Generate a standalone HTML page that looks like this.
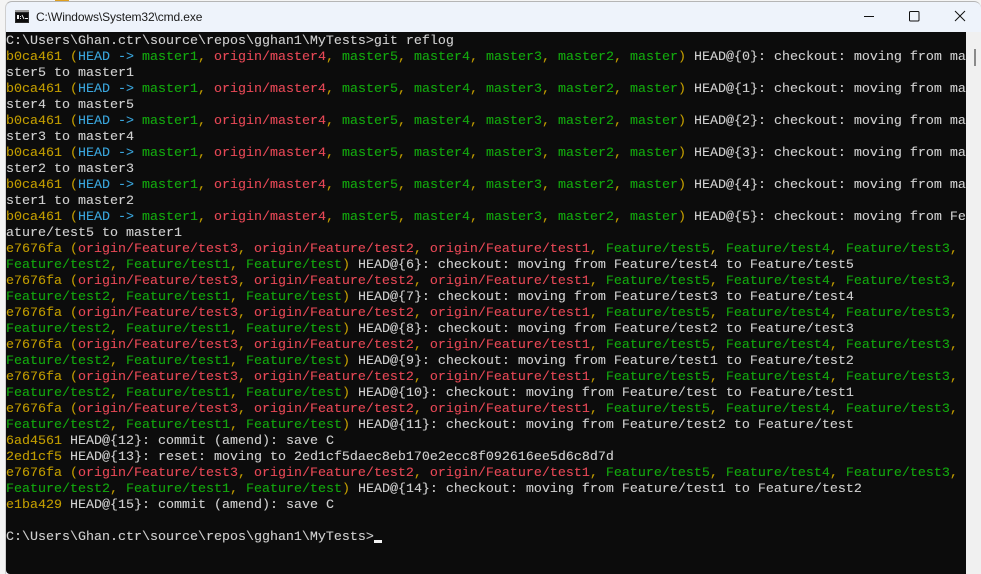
<!DOCTYPE html>
<html><head><meta charset="utf-8"><style>
html,body{margin:0;padding:0;width:981px;height:574px;overflow:hidden;background:#f4f4f4}
#win{position:absolute;left:5px;top:1px;width:976px;height:573px;background:#eef3fb;border-top:1px solid #b5b5b5;border-left:1px solid #cfcfcf;border-top-left-radius:7px;border-top-right-radius:7px;box-sizing:border-box}
#orange{position:absolute;left:55px;top:0;width:14px;height:1px;background:#e0a020}
#title{position:absolute;left:36px;top:9px;font:12px/16px "Liberation Sans",sans-serif;color:#1a1a1a;white-space:pre;letter-spacing:-.115px}
#term{position:absolute;left:6px;top:32px;width:960px;height:542px;background:#0c0c0c;overflow:hidden;border-bottom-left-radius:4px}
#side{position:absolute;left:966px;top:32px;width:15px;height:542px;background:#f0f0f0}
#thumb{position:absolute;left:974px;top:49px;width:2px;height:17px;background:#8a8a8a}
#out{position:absolute;left:0;top:2px;width:960px;margin:0;font:13.333px/16px "Liberation Mono",monospace;color:#d0d0d0;overflow:hidden;-webkit-text-stroke:.1px}
#out div{height:16px;width:960px;overflow:hidden;white-space:pre}
.y{color:#c19c00}.c{color:#3aa6dd}.g{color:#13a90e}.r{color:#e74856}
#cur{position:absolute;left:368px;top:508px;width:8px;height:3px;background:#f2f2f2}
svg{position:absolute}
</style></head><body>
<div id="orange"></div>
<div id="win"></div>
<svg style="left:15px;top:10px" width="14" height="13" viewBox="0 0 14 13"><rect width="14" height="13" fill="#2b2b2b"/><rect y="0" width="14" height="2" fill="#9a9a9a"/><rect x="1" y="3" width="12" height="9" fill="#0c0c0c"/><rect x="2" y="5" width="2" height="4" fill="#eee"/><rect x="5" y="6" width="1" height="1" fill="#eee"/><rect x="5" y="8" width="1" height="1" fill="#eee"/><path d="M7 5l2 4" stroke="#eee" stroke-width="1" fill="none"/><rect x="10" y="8" width="3" height="1" fill="#eee"/></svg>
<div id="title">C:\Windows\System32\cmd.exe</div>
<svg style="left:860px;top:8px" width="110" height="18" viewBox="0 0 110 18" fill="none" stroke="#111" stroke-width="1"><path d="M4 8.5H14"/><rect x="49.5" y="3.5" width="9.5" height="9.5" rx="1"/><path d="M95 3L105 13M105 3L95 13"/></svg>
<div id="term"><div id="out"><div>C:\Users\Ghan.ctr\source\repos\gghan1\MyTests&gt;git reflog</div><div><span class="y">b0ca461 (</span><span class="c">HEAD -&gt; </span><span class="g">master1</span><span class="y">, </span><span class="r">origin/master4</span><span class="y">, </span><span class="g">master5</span><span class="y">, </span><span class="g">master4</span><span class="y">, </span><span class="g">master3</span><span class="y">, </span><span class="g">master2</span><span class="y">, </span><span class="g">master</span><span class="y">)</span> HEAD@{0}: checkout: moving from ma</div><div>ster5 to master1</div><div><span class="y">b0ca461 (</span><span class="c">HEAD -&gt; </span><span class="g">master1</span><span class="y">, </span><span class="r">origin/master4</span><span class="y">, </span><span class="g">master5</span><span class="y">, </span><span class="g">master4</span><span class="y">, </span><span class="g">master3</span><span class="y">, </span><span class="g">master2</span><span class="y">, </span><span class="g">master</span><span class="y">)</span> HEAD@{1}: checkout: moving from ma</div><div>ster4 to master5</div><div><span class="y">b0ca461 (</span><span class="c">HEAD -&gt; </span><span class="g">master1</span><span class="y">, </span><span class="r">origin/master4</span><span class="y">, </span><span class="g">master5</span><span class="y">, </span><span class="g">master4</span><span class="y">, </span><span class="g">master3</span><span class="y">, </span><span class="g">master2</span><span class="y">, </span><span class="g">master</span><span class="y">)</span> HEAD@{2}: checkout: moving from ma</div><div>ster3 to master4</div><div><span class="y">b0ca461 (</span><span class="c">HEAD -&gt; </span><span class="g">master1</span><span class="y">, </span><span class="r">origin/master4</span><span class="y">, </span><span class="g">master5</span><span class="y">, </span><span class="g">master4</span><span class="y">, </span><span class="g">master3</span><span class="y">, </span><span class="g">master2</span><span class="y">, </span><span class="g">master</span><span class="y">)</span> HEAD@{3}: checkout: moving from ma</div><div>ster2 to master3</div><div><span class="y">b0ca461 (</span><span class="c">HEAD -&gt; </span><span class="g">master1</span><span class="y">, </span><span class="r">origin/master4</span><span class="y">, </span><span class="g">master5</span><span class="y">, </span><span class="g">master4</span><span class="y">, </span><span class="g">master3</span><span class="y">, </span><span class="g">master2</span><span class="y">, </span><span class="g">master</span><span class="y">)</span> HEAD@{4}: checkout: moving from ma</div><div>ster1 to master2</div><div><span class="y">b0ca461 (</span><span class="c">HEAD -&gt; </span><span class="g">master1</span><span class="y">, </span><span class="r">origin/master4</span><span class="y">, </span><span class="g">master5</span><span class="y">, </span><span class="g">master4</span><span class="y">, </span><span class="g">master3</span><span class="y">, </span><span class="g">master2</span><span class="y">, </span><span class="g">master</span><span class="y">)</span> HEAD@{5}: checkout: moving from Fe</div><div>ature/test5 to master1</div><div><span class="y">e7676fa (</span><span class="r">origin/Feature/test3</span><span class="y">, </span><span class="r">origin/Feature/test2</span><span class="y">, </span><span class="r">origin/Feature/test1</span><span class="y">, </span><span class="g">Feature/test5</span><span class="y">, </span><span class="g">Feature/test4</span><span class="y">, </span><span class="g">Feature/test3</span><span class="y">,</span></div><div><span class="g">Feature/test2</span><span class="y">, </span><span class="g">Feature/test1</span><span class="y">, </span><span class="g">Feature/test</span><span class="y">)</span> HEAD@{6}: checkout: moving from Feature/test4 to Feature/test5</div><div><span class="y">e7676fa (</span><span class="r">origin/Feature/test3</span><span class="y">, </span><span class="r">origin/Feature/test2</span><span class="y">, </span><span class="r">origin/Feature/test1</span><span class="y">, </span><span class="g">Feature/test5</span><span class="y">, </span><span class="g">Feature/test4</span><span class="y">, </span><span class="g">Feature/test3</span><span class="y">,</span></div><div><span class="g">Feature/test2</span><span class="y">, </span><span class="g">Feature/test1</span><span class="y">, </span><span class="g">Feature/test</span><span class="y">)</span> HEAD@{7}: checkout: moving from Feature/test3 to Feature/test4</div><div><span class="y">e7676fa (</span><span class="r">origin/Feature/test3</span><span class="y">, </span><span class="r">origin/Feature/test2</span><span class="y">, </span><span class="r">origin/Feature/test1</span><span class="y">, </span><span class="g">Feature/test5</span><span class="y">, </span><span class="g">Feature/test4</span><span class="y">, </span><span class="g">Feature/test3</span><span class="y">,</span></div><div><span class="g">Feature/test2</span><span class="y">, </span><span class="g">Feature/test1</span><span class="y">, </span><span class="g">Feature/test</span><span class="y">)</span> HEAD@{8}: checkout: moving from Feature/test2 to Feature/test3</div><div><span class="y">e7676fa (</span><span class="r">origin/Feature/test3</span><span class="y">, </span><span class="r">origin/Feature/test2</span><span class="y">, </span><span class="r">origin/Feature/test1</span><span class="y">, </span><span class="g">Feature/test5</span><span class="y">, </span><span class="g">Feature/test4</span><span class="y">, </span><span class="g">Feature/test3</span><span class="y">,</span></div><div><span class="g">Feature/test2</span><span class="y">, </span><span class="g">Feature/test1</span><span class="y">, </span><span class="g">Feature/test</span><span class="y">)</span> HEAD@{9}: checkout: moving from Feature/test1 to Feature/test2</div><div><span class="y">e7676fa (</span><span class="r">origin/Feature/test3</span><span class="y">, </span><span class="r">origin/Feature/test2</span><span class="y">, </span><span class="r">origin/Feature/test1</span><span class="y">, </span><span class="g">Feature/test5</span><span class="y">, </span><span class="g">Feature/test4</span><span class="y">, </span><span class="g">Feature/test3</span><span class="y">,</span></div><div><span class="g">Feature/test2</span><span class="y">, </span><span class="g">Feature/test1</span><span class="y">, </span><span class="g">Feature/test</span><span class="y">)</span> HEAD@{10}: checkout: moving from Feature/test to Feature/test1</div><div><span class="y">e7676fa (</span><span class="r">origin/Feature/test3</span><span class="y">, </span><span class="r">origin/Feature/test2</span><span class="y">, </span><span class="r">origin/Feature/test1</span><span class="y">, </span><span class="g">Feature/test5</span><span class="y">, </span><span class="g">Feature/test4</span><span class="y">, </span><span class="g">Feature/test3</span><span class="y">,</span></div><div><span class="g">Feature/test2</span><span class="y">, </span><span class="g">Feature/test1</span><span class="y">, </span><span class="g">Feature/test</span><span class="y">)</span> HEAD@{11}: checkout: moving from Feature/test2 to Feature/test</div><div><span class="y">6ad4561</span> HEAD@{12}: commit (amend): save C</div><div><span class="y">2ed1cf5</span> HEAD@{13}: reset: moving to 2ed1cf5daec8eb170e2ecc8f092616ee5d6c8d7d</div><div><span class="y">e7676fa (</span><span class="r">origin/Feature/test3</span><span class="y">, </span><span class="r">origin/Feature/test2</span><span class="y">, </span><span class="r">origin/Feature/test1</span><span class="y">, </span><span class="g">Feature/test5</span><span class="y">, </span><span class="g">Feature/test4</span><span class="y">, </span><span class="g">Feature/test3</span><span class="y">,</span></div><div><span class="g">Feature/test2</span><span class="y">, </span><span class="g">Feature/test1</span><span class="y">, </span><span class="g">Feature/test</span><span class="y">)</span> HEAD@{14}: checkout: moving from Feature/test1 to Feature/test2</div><div><span class="y">e1ba429</span> HEAD@{15}: commit (amend): save C</div><div> </div><div>C:\Users\Ghan.ctr\source\repos\gghan1\MyTests&gt;</div></div><div id="cur"></div></div>
<div id="side"></div><div id="thumb"></div>
</body></html>
